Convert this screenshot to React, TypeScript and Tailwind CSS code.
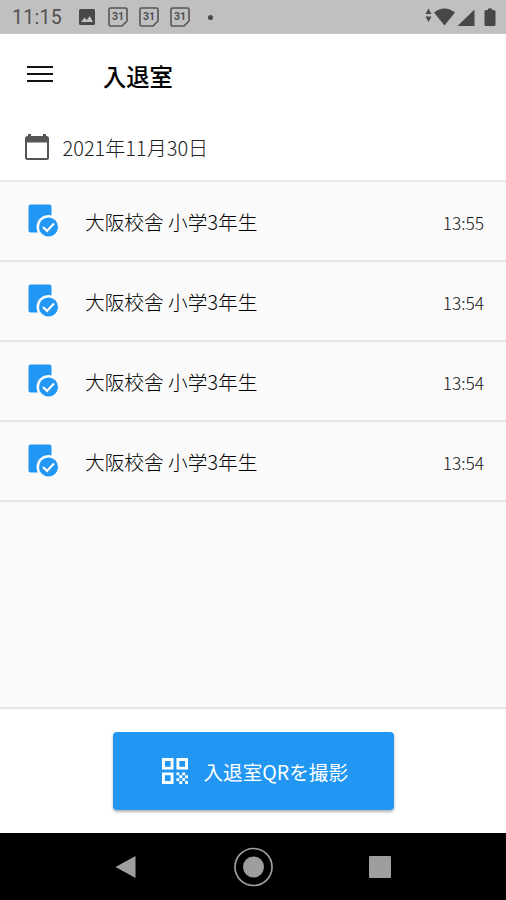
const records = [
  { id: 1, place: '大阪校舎 小学3年生', time: '13:55' },
  { id: 2, place: '大阪校舎 小学3年生', time: '13:54' },
  { id: 3, place: '大阪校舎 小学3年生', time: '13:54' },
  { id: 4, place: '大阪校舎 小学3年生', time: '13:54' },
];

function EventIcon() {
  return (
    <svg className="h-5 w-5 shrink-0" viewBox="0 0 20 20" fill="none" stroke="#555">
      <path d="M2.500 1h15A1.500 1.500 0 0 1 19 2.500V14l-5 5H2.500A1.500 1.500 0 0 1 1 17.500v-15A1.500 1.500 0 0 1 2.500 1z" strokeWidth="1.600" strokeLinejoin="round" />
      <text x="10" y="13.300" textAnchor="middle" fill="#505050" stroke="none" className="font-[Roboto,sans-serif] text-[10.5px] font-bold">31</text>
    </svg>
  );
}

function StatusBar() {
  return (
    <div className="flex h-[34px] shrink-0 items-center bg-[#c0c0c0] pr-[10px] pl-3 text-[#505050]">
      <span className="w-[67px] pt-[2px] font-[Roboto,sans-serif] text-[19.5px] leading-none tracking-[0.3px]">11:15</span>
      <svg className="h-4 w-4" viewBox="0 0 16 16">
        <rect width="16" height="16" rx="1.5" fill="#484848" />
        <path d="M2 13l3.5-4.5 2.3 2.4L10.8 7 14 13z" fill="#c0c0c0" />
      </svg>
      <div className="ml-[13px] flex gap-[11px]">
        <EventIcon />
        <EventIcon />
        <EventIcon />
      </div>
      <span className="ml-[18px] h-[5px] w-[5px] rounded-full bg-[#484848]" />
      <svg className="ml-auto h-[22px] w-[72px]" viewBox="424 6 72 22" fill="#484848">
        <path d="M428.500 8.500l3 5.500h-6zM425.500 16.500h6l-3 5.500z" />
        <path d="M434 12.500q10.500-8 21 0L444.500 25.500z" />
        <path d="M474.500 9.500v16.500h-17z" />
        <path d="M488 8.500h4v1.500h2a1.500 1.500 0 0 1 1.500 1.500v13a1.500 1.500 0 0 1-1.500 1.500h-8a1.500 1.500 0 0 1-1.500-1.500v-13a1.500 1.500 0 0 1 1.500-1.500h2z" />
      </svg>
    </div>
  );
}

function CheckedIcon() {
  return (
    <svg className="-mt-[2px] h-[33px] w-[31px] shrink-0" viewBox="0 0 31 33" fill="#2196f3">
      <rect x="0.500" y="0.500" width="23" height="28" rx="2" />
      <circle cx="20.500" cy="23" r="12" fill="#fafafa" />
      <circle cx="20.500" cy="23" r="9.500" />
      <path d="M15 23l4 4 7-7.500" fill="none" stroke="#fff" strokeWidth="2.200" />
    </svg>
  );
}

export default function App() {
  return (
    <div className="flex h-[900px] w-[506px] flex-col overflow-hidden bg-white font-['Noto_Sans_CJK_JP',sans-serif]">
      <StatusBar />
      <header className="flex h-[82px] shrink-0 items-center pl-[27px]">
        <button aria-label="menu" className="-mt-[3px] flex w-[26px] flex-col gap-[5px]">
          <span className="h-[2px] bg-[#111]" />
          <span className="h-[2px] bg-[#111]" />
          <span className="h-[2px] bg-[#111]" />
        </button>
        <h1 className="ml-[50px] pt-[4px] text-[23.300px] leading-none font-medium text-black">入退室</h1>
      </header>
      <div className="flex h-[66px] shrink-0 items-center border-b-2 border-[#e9e9e9] pl-[25px]">
        <svg className="-mt-px h-[27px] w-6" viewBox="0 0 24 27">
          <path d="M2.500 2h19A2.500 2.500 0 0 1 24 4.500v19a2.500 2.500 0 0 1-2.500 2.500h-19A2.500 2.500 0 0 1 0 23.500v-19A2.500 2.500 0 0 1 2.500 2zM2 8.500V24h20V8.500z" fill="#555" fillRule="evenodd" />
          <path d="M3 0h3v3H3zM18 0h3v3h-3z" fill="#555" />
        </svg>
        <span className="ml-[13.500px] text-[20px] leading-none font-light text-[#222]">2021年11月30日</span>
      </div>
      <main className="flex-1 bg-[#fafafa]">
        {records.map((r) => (
          <div key={r.id} className="flex h-20 items-center border-b-2 border-[#e5e5e5] pr-[22px] pl-7">
            <CheckedIcon />
            <span className="ml-[26px] pt-px text-[19.700px] leading-none font-light text-black">{r.place}</span>
            <span className="ml-auto pt-[3px] text-[17.300px] leading-none font-light text-[#111]">{r.time}</span>
          </div>
        ))}
      </main>
      <footer className="flex h-[126px] shrink-0 justify-center border-t-2 border-[#e6e6e6] pt-[23px]">
        <button className="flex h-[78px] w-[281px] items-center rounded-[4px] bg-[#2196f3] pl-[49px] text-white shadow-[0_2px_3px_rgba(0,0,0,0.3)]">
          <svg className="h-[26px] w-[26px]" viewBox="3 3 18 18" fill="currentColor">
            <path d="M3 11h8V3H3v8zm2-6h4v4H5V5zM3 21h8v-8H3v8zm2-6h4v4H5v-4zM13 3v8h8V3h-8zm6 6h-4V5h4v4zM19 19h2v2h-2zM13 13h2v2h-2zM15 15h2v2h-2zM13 17h2v2h-2zM15 19h2v2h-2zM17 17h2v2h-2zM17 13h2v2h-2zM19 15h2v2h-2z" />
          </svg>
          <span className="ml-4 pt-[2px] text-[19.600px] leading-none font-normal">入退室QRを撮影</span>
        </button>
      </footer>
      <nav className="flex h-[67px] shrink-0 items-center bg-black pl-[115px]">
        <svg className="h-6 w-[21px]" viewBox="0 0 21 24"><path d="M0.500 12L20.500 1v22z" fill="#9e9e9e" /></svg>
        <svg className="ml-[97px] h-10 w-10" viewBox="0 0 40 40">
          <circle cx="20.500" cy="20" r="18.500" fill="none" stroke="#9e9e9e" strokeWidth="1.700" />
          <circle cx="20.500" cy="20" r="10.500" fill="#9e9e9e" />
        </svg>
        <span className="ml-[96px] h-[22px] w-[22px] rounded-[1px] bg-[#9e9e9e]" />
      </nav>
    </div>
  );
}
